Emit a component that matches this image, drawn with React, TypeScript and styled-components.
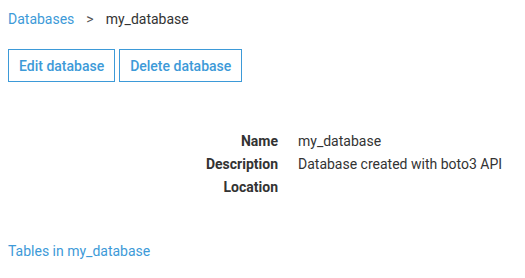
import styled, { createGlobalStyle } from "styled-components";

const GlobalStyle = createGlobalStyle`
  body {
    margin: 0;
    font-family: Roboto, "Liberation Sans", sans-serif;
    font-size: 14px;
    color: #333;
    background: #fff;
  }
`;

const Page = styled.div`
  padding: 8px;
`;

const Breadcrumb = styled.div`
  display: flex;
  align-items: center;
  height: 20px;
  margin-top: 1px;
  line-height: 20px;
`;

const Crumb = styled.a`
  color: #3d9ad8;
  text-decoration: none;
`;

const Separator = styled.span`
  padding: 0 12px;
  color: #555;
`;

const Current = styled.span`
  color: #333;
`;

const Actions = styled.div`
  display: flex;
  gap: 4px;
  margin-top: 20px;
`;

const Button = styled.button`
  height: 33px;
  padding: 0 10px;
  background: #fff;
  border: 1px solid #3d9ad8;
  border-radius: 0;
  color: #3d9ad8;
  font-family: Roboto, "Liberation Sans", sans-serif;
  font-size: 14px;
  font-weight: 500;
  cursor: pointer;
`;

const Details = styled.dl`
  display: grid;
  grid-template-columns: 270px 1fr;
  column-gap: 20px;
  margin: 48px 0 0;
  line-height: 23px;
`;

const Label = styled.dt`
  text-align: right;
  font-weight: 700;
  color: #333;
`;

const Value = styled.dd`
  margin: 0;
  min-height: 23px;
`;

const SectionLink = styled.a`
  display: block;
  margin-top: 42px;
  color: #3d9ad8;
  text-decoration: none;
  line-height: 20px;
`;

const rows = [
  { label: "Name", value: "my_database" },
  { label: "Description", value: "Database created with boto3 API" },
  { label: "Location", value: "" },
];

export default function App() {
  return (
    <>
      <GlobalStyle />
      <Page>
        <Breadcrumb>
          <Crumb href="#">Databases</Crumb>
          <Separator>&gt;</Separator>
          <Current>my_database</Current>
        </Breadcrumb>
        <Actions>
          <Button>Edit database</Button>
          <Button>Delete database</Button>
        </Actions>
        <Details>
          {rows.map((r) => (
            <>
              <Label key={r.label + "-l"}>{r.label}</Label>
              <Value key={r.label + "-v"}>{r.value}</Value>
            </>
          ))}
        </Details>
        <SectionLink href="#">Tables in my_database</SectionLink>
      </Page>
    </>
  );
}
